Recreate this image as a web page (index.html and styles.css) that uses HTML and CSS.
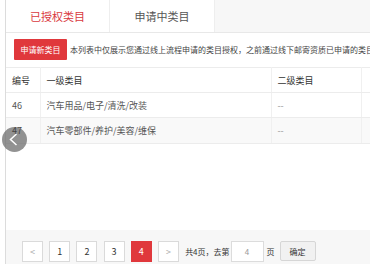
FILE: index.html
```html
<!DOCTYPE html>
<html lang="zh">
<head>
<meta charset="utf-8">
<link rel="stylesheet" href="styles.css">
</head>
<body>
<div class="page">
  <div class="tabs">
    <div class="tab active">已授权类目</div>
    <div class="tab">申请中类目</div>
  </div>
  <div class="toolbar">
    <button class="btn-red">申请新类目</button>
    <span class="notice">本列表中仅展示您通过线上流程申请的类目授权，之前通过线下邮寄资质已申请的类目授权不在此列表中展示</span>
  </div>
  <table class="grid">
    <colgroup>
      <col class="c1"><col class="c2"><col class="c3"><col class="c4">
    </colgroup>
    <tr class="head"><td>编号</td><td>一级类目</td><td>二级类目</td><td></td></tr>
    <tr><td>46</td><td>汽车用品/电子/清洗/改装</td><td class="dash">--</td><td></td></tr>
    <tr class="alt"><td><span class="num">47</span></td><td>汽车零部件/养护/美容/维保</td><td class="dash">--</td><td></td></tr>
  </table>
  <div class="pager">
    <span class="pg arrow">&lt;</span>
    <span class="pg">1</span>
    <span class="pg">2</span>
    <span class="pg">3</span>
    <span class="pg current">4</span>
    <span class="pg arrow">&gt;</span>
    <span class="ptext">共4页，去第</span>
    <span class="pinput">4</span>
    <span class="ptext">页</span>
    <span class="pok">确定</span>
  </div>
</div>
<div class="back"><svg width="25" height="25" viewBox="0 0 25 25"><path d="M14.5 7 L8.5 12.5 L14.5 18" fill="none" stroke="#fff" stroke-width="1.5"/></svg></div>
</body>
</html>
```

FILE: styles.css
```css
* { box-sizing: border-box; }
html, body { margin: 0; padding: 0; }
body {
  width: 370px;
  height: 264px;
  overflow: hidden;
  font-family: "Noto Sans CJK SC", "Liberation Sans", sans-serif;
  color: #333;
  background: #fff;
}
.page {
  margin-left: 5px;
  border-left: 1px solid #dcdcdc;
  height: 264px;
  display: flex;
  flex-direction: column;
}
.tabs {
  display: flex;
  height: 33px;
  background: #f7f7f7;
  border-bottom: 1px solid #e8e8e8;
  flex: none;
}
.tab {
  width: 105px;
  background: #fff;
  display: flex;
  align-items: center;
  justify-content: center;
  font-size: 11px;
  color: #555;
  border-right: 1px solid #eee;
}
.tab.active { width: 104px; color: #d9393e; }
.toolbar {
  display: flex;
  align-items: center;
  padding: 6px 0 0 8px;
  white-space: nowrap;
  overflow: hidden;
  flex: none;
}
.btn-red {
  border: none;
  background: #e0383c;
  color: #fff;
  font-family: inherit;
  font-size: 8px;
  height: 21px;
  width: 53px;
  padding: 0;
  border-radius: 1px;
  flex: none;
}
.notice {
  font-size: 8px;
  color: #444;
  margin-left: 3px;
}
.grid {
  margin-top: 7px;
  border-collapse: collapse;
  width: 380px;
  table-layout: fixed;
  font-size: 9px;
  flex: none;
}
.c1 { width: 34px; }
.c2 { width: 231px; }
.c3 { width: 90px; }
.c4 { width: 25px; }
.grid td {
  border-top: 1px solid #ececec;
  border-bottom: 1px solid #ececec;
  border-right: 1px solid #f0f0f0;
  height: 25px;
  padding: 0 0 0 6px;
  color: #555;
  white-space: nowrap;
}
.grid .head td { color: #333; }
.grid .alt td { background: #f9f9f9; height: 26px; }
.grid .dash { color: #999; }
.num { position: relative; z-index: 2; color: #444; }
.pager {
  margin-top: auto;
  height: 34px;
  background: #f7f7f7;
  display: flex;
  align-items: flex-start;
  padding: 11px 0 0 16px;
  font-size: 9px;
}
.pg {
  width: 21px;
  height: 21px;
  border: 1px solid #dadada;
  background: #fff;
  display: flex;
  align-items: center;
  justify-content: center;
  margin-right: 6.2px;
  color: #333;
}
.pg.arrow { color: #aaa; }
.pg.current { background: #e0383c; border-color: #e0383c; color: #fff; }
.ptext {
  font-size: 8px;
  line-height: 21px;
  color: #333;
}
.pinput {
  width: 33px;
  height: 21px;
  border: 1px solid #dcdcdc;
  background: #fff;
  margin: 0 3px 0 1px;
  display: flex;
  align-items: center;
  justify-content: center;
  color: #999;
  font-size: 8px;
}
.pok {
  margin-left: 5px;
  width: 36px;
  height: 20px;
  border: 1px solid #d6d6d6;
  background: #f1f1f1;
  border-radius: 2px;
  display: flex;
  align-items: center;
  justify-content: center;
  font-size: 8px;
  color: #333;
}
.back {
  position: absolute;
  z-index: 1;
  left: 2px;
  top: 127px;
  width: 25px;
  height: 25px;
  border-radius: 50%;
  background: rgba(110,110,110,0.75);
}
.back svg { display: block; }
```
